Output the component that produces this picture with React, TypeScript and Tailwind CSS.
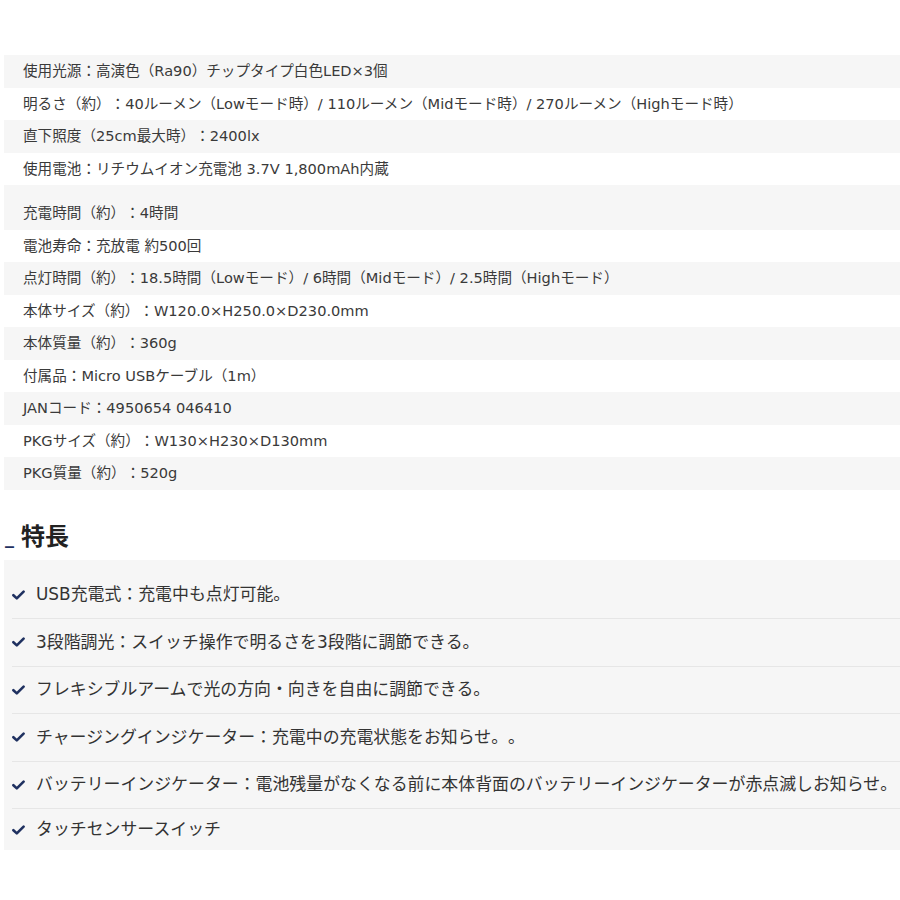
/* Product spec table and feature list */

const specs: (string | null)[] = [
  "使用光源：高演色（Ra90）チップタイプ白色LED×3個",
  "明るさ（約）：40ルーメン（Lowモード時）/ 110ルーメン（Midモード時）/ 270ルーメン（Highモード時）",
  "直下照度（25cm最大時）：2400lx",
  "使用電池：リチウムイオン充電池 3.7V 1,800mAh内蔵",
  null,
  "充電時間（約）：4時間",
  "電池寿命：充放電 約500回",
  "点灯時間（約）：18.5時間（Lowモード）/ 6時間（Midモード）/ 2.5時間（Highモード）",
  "本体サイズ（約）：W120.0×H250.0×D230.0mm",
  "本体質量（約）：360g",
  "付属品：Micro USBケーブル（1m）",
  "JANコード：4950654 046410",
  "PKGサイズ（約）：W130×H230×D130mm",
  "PKG質量（約）：520g",
];

const features = [
  "USB充電式：充電中も点灯可能。",
  "3段階調光：スイッチ操作で明るさを3段階に調節できる。",
  "フレキシブルアームで光の方向・向きを自由に調節できる。",
  "チャージングインジケーター：充電中の充電状態をお知らせ。。",
  "バッテリーインジケーター：電池残量がなくなる前に本体背面のバッテリーインジケーターが赤点滅しお知らせ。",
  "タッチセンサースイッチ",
];

function Check() {
  return (
    <svg width="13" height="10" viewBox="0 0 13 10" className="shrink-0">
      <path d="M1.4 5.2 L4.8 8.4 L11.6 1.6" fill="none" stroke="#1f3160" strokeWidth="2.6" strokeLinecap="round" strokeLinejoin="round" />
    </svg>
  );
}

export default function App() {
  const font = { fontFamily: "'DejaVu Sans', 'Noto Sans CJK JP', sans-serif" };
  let shade = false;

  return (
    <div className="w-[900px] h-[900px] bg-white overflow-hidden [text-spacing-trim:space-all]" style={font}>
      {/* Spec table */}
      <div className="pt-[55px] pl-[4px]">
        {specs.map((s, i) => {
          if (s === null) {
            return <div key={i} className="h-[12px] bg-[#f6f6f6]" />;
          }
          shade = !shade;
          return (
            <div
              key={i}
              className={`h-[32.5px] flex items-center pl-[19px] text-[14.6px] text-[#3a3a3a] whitespace-nowrap ${shade ? "bg-[#f6f6f6]" : "bg-white"}`}
            >
              {s}
            </div>
          );
        })}
      </div>

      {/* Heading */}
      <div className="mt-[25px] h-[40px] flex items-center pl-[5px]">
        <span className="text-[#1f3160] text-[18px] font-bold leading-none mt-[6px] mr-[7px]">_</span>
        <h2 className="text-[24px] font-bold text-[#222] leading-none" style={{ fontFamily: "'Noto Sans CJK JP', sans-serif" }}>
          特長
        </h2>
      </div>

      {/* Feature list */}
      <div className="mt-[5px] ml-[4px] bg-[#f6f6f6] pt-[12px]">
        {features.map((f, i) => (
          <div
            key={i}
            className={`ml-[8px] flex items-center gap-[11px] text-[16.9px] text-[#333] whitespace-nowrap ${i < features.length - 1 ? "h-[47.5px] border-b border-[#e6e6e6]" : "h-[41px]"}`}
          >
            <Check />
            <span>{f}</span>
          </div>
        ))}
      </div>
    </div>
  );
}
